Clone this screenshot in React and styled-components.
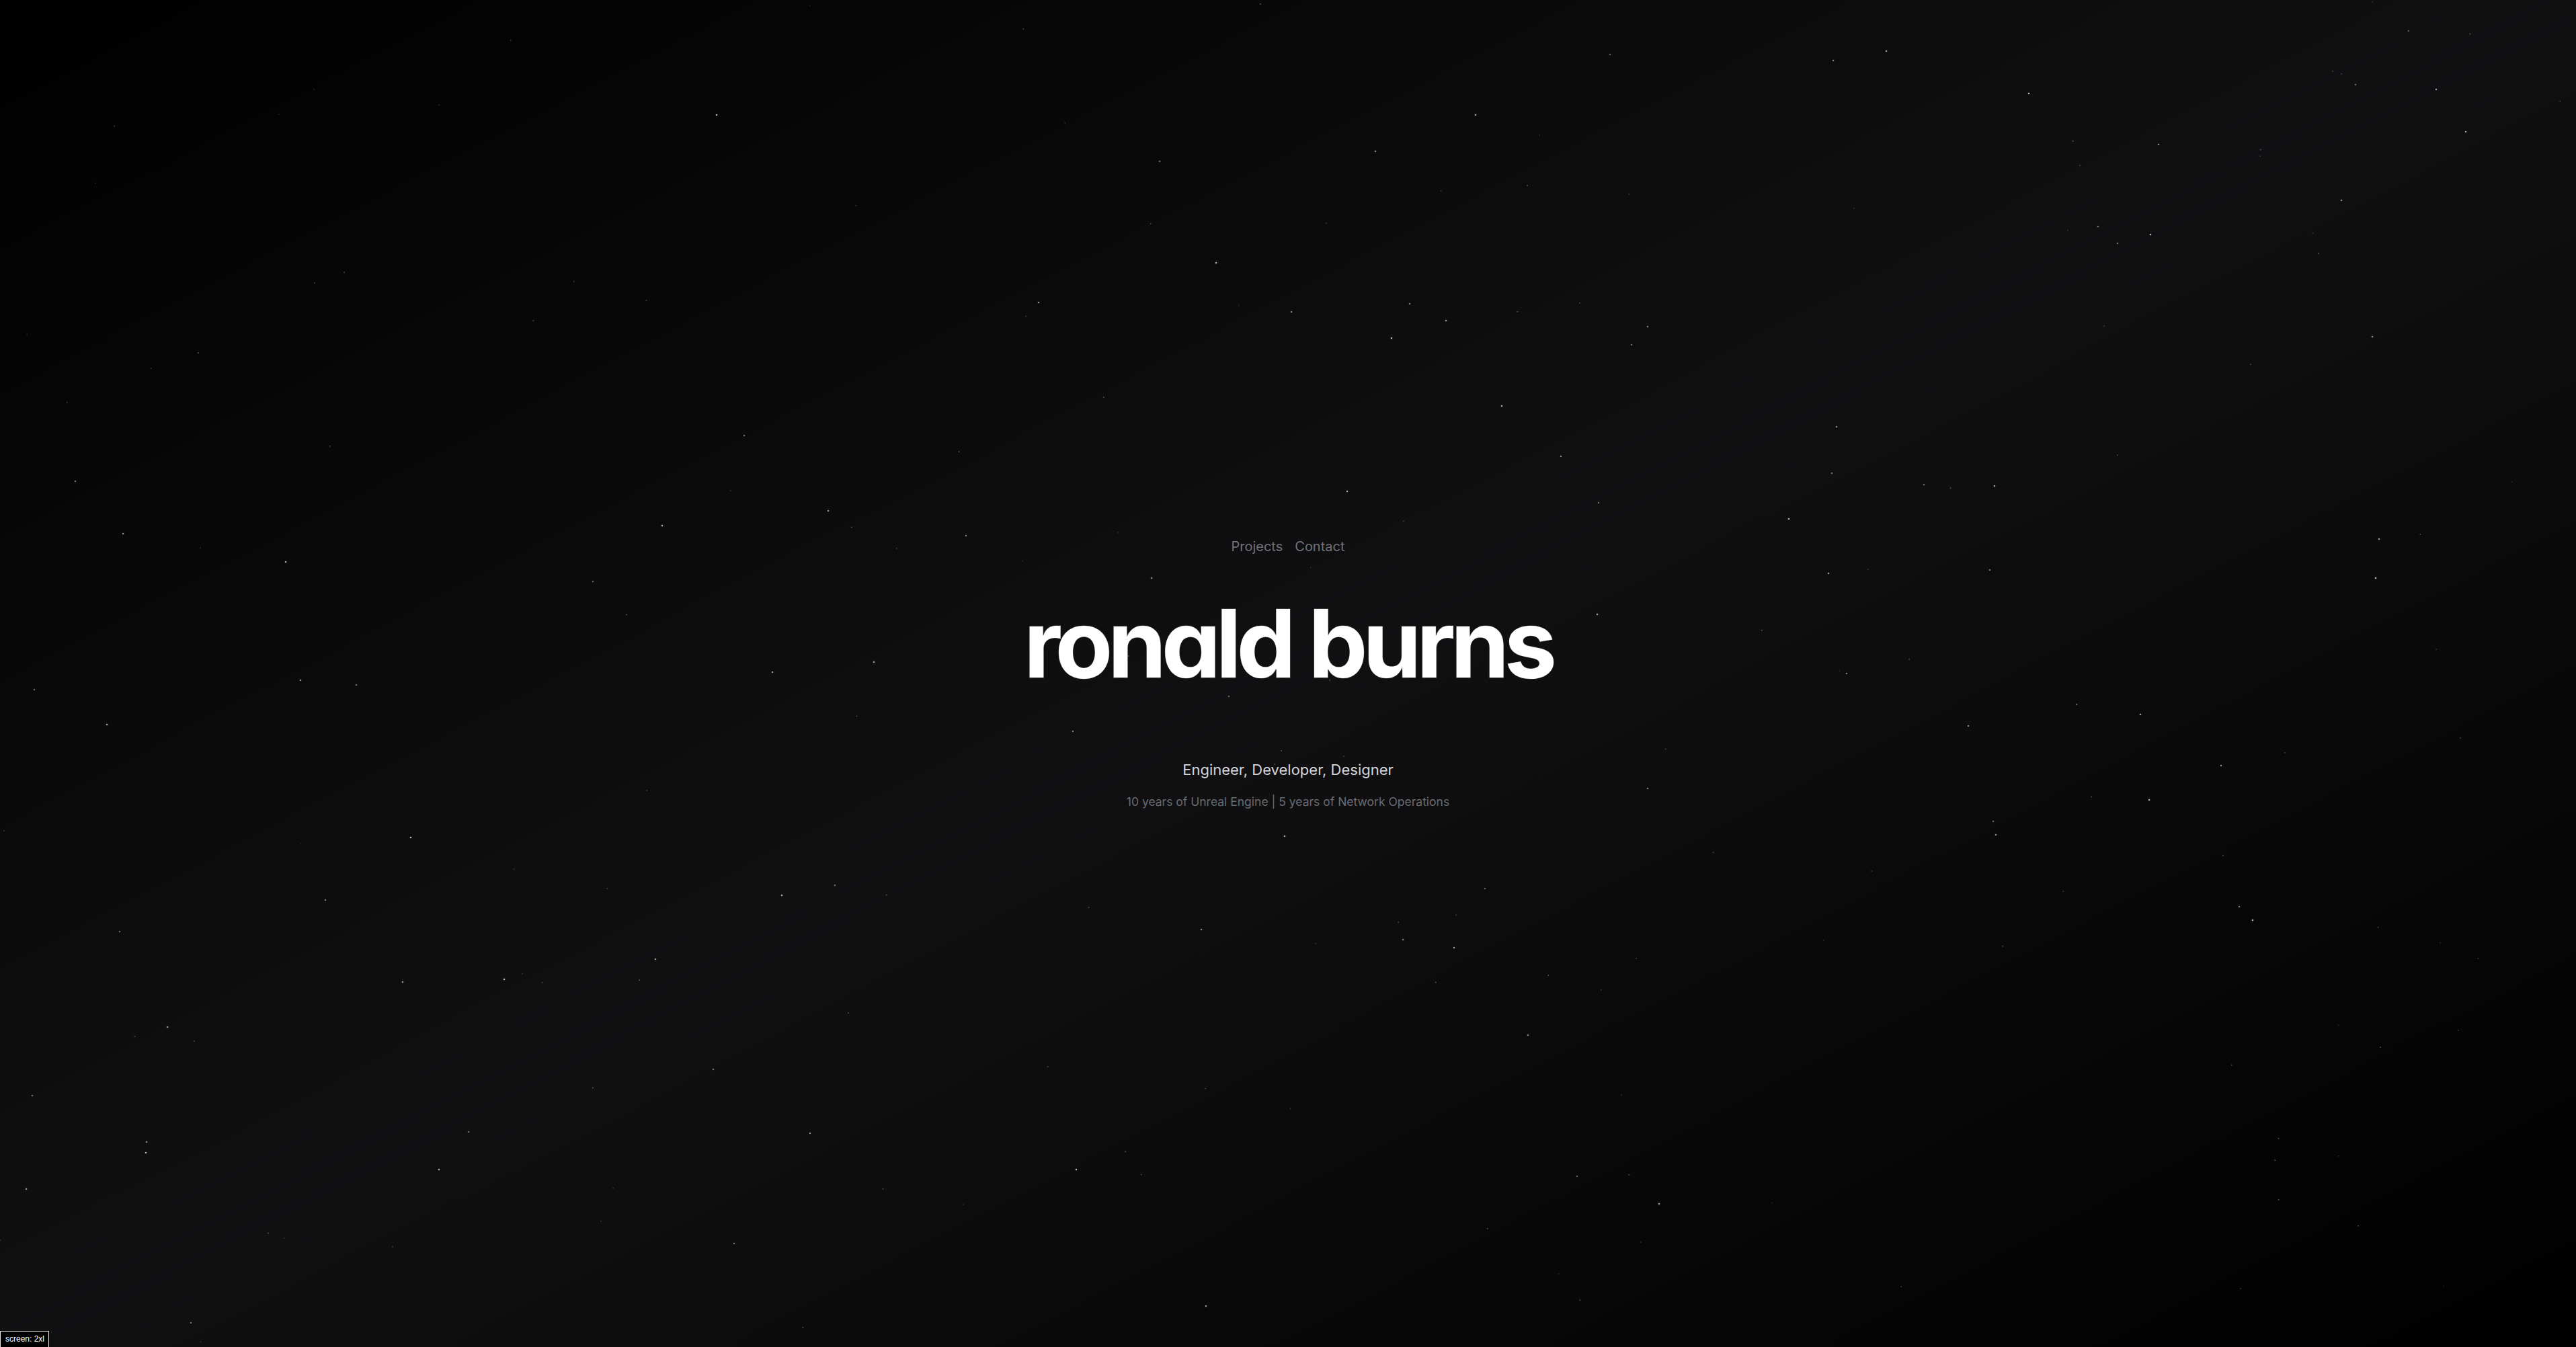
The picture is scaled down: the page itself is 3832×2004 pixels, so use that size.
import React from 'react';
import styled, { createGlobalStyle } from 'styled-components';

const GlobalStyle = createGlobalStyle`
  html, body {
    margin: 0;
    padding: 0;
    background: #000;
  }
  body {
    font-family: Inter, "Noto Sans", sans-serif;
    -webkit-font-smoothing: antialiased;
  }
`;

const Page = styled.div`
  position: relative;
  width: 100vw;
  height: 100vh;
  overflow: hidden;
  display: flex;
  flex-direction: column;
  align-items: center;
  justify-content: center;
  background: linear-gradient(to top left, #000000, rgba(82, 82, 91, 0.2), #000000);
`;

const Particles = styled.svg`
  position: absolute;
  inset: 0;
  width: 100%;
  height: 100%;
  pointer-events: none;
`;

const Nav = styled.nav`
  position: relative;
  display: flex;
  gap: 18px;
  margin-bottom: 60px;
`;

const NavLink = styled.a`
  font-size: 20px;
  line-height: 28px;
  color: #71717a;
  text-decoration: none;
  cursor: pointer;
`;

const Title = styled.h1`
  position: relative;
  margin: 0 0 104px;
  font-size: 140px;
  line-height: 140px;
  font-weight: 700;
  letter-spacing: -0.052em;
  font-feature-settings: "cv11" 1, "ss07" 1;
  color: #ffffff;
  -webkit-text-stroke: 1px rgba(255, 255, 255, 0.3);
  white-space: nowrap;
`;

const Intro = styled.div`
  position: relative;
  display: flex;
  flex-direction: column;
  align-items: center;
  gap: 22px;
  text-align: center;
`;

const Role = styled.h2`
  margin: 0;
  font-size: 22px;
  line-height: 28px;
  font-weight: 400;
  color: #d4d4d8;
`;

const Experience = styled.p`
  margin: 0;
  font-size: 17.5px;
  line-height: 24px;
  color: #6b6b72;
`;

const ScreenBadge = styled.div`
  position: fixed;
  left: 0;
  bottom: 0;
  padding: 3px 6px 4px 7px;
  font-family: "Liberation Sans", Arial, sans-serif;
  font-size: 12px;
  line-height: 16px;
  color: #ffffff;
  background: #000;
  border: 1px solid #e5e5e5;
  border-bottom: none;
`;

const stars = [
  [3583, 46], [3668, 196], [3211, 215], [3150, 362], [3199, 349], [3529, 501],
  [3121, 337], [3018, 139], [2806, 76], [2727, 90], [2395, 81], [2195, 171],
  [2046, 225], [1725, 240], [1809, 391], [1921, 464], [2097, 452], [2070, 503],
  [2151, 477], [2451, 486], [2427, 513], [2234, 604], [2322, 679], [2378, 748],
  [2004, 731], [1545, 450], [1107, 648], [1066, 171], [1232, 760], [1437, 797],
  [2862, 721], [2967, 723], [2732, 635], [2725, 704], [2661, 772], [2720, 853],
  [2960, 848], [3534, 860], [3539, 802], [2747, 1002], [3089, 1048], [3184, 1063],
  [2928, 1080], [2965, 1222], [3197, 1190], [3304, 1139], [3331, 1349], [3351, 1369],
  [2163, 1410], [2087, 1398], [2209, 1322], [1911, 1244], [1787, 1383], [1242, 1317],
  [1163, 1332], [975, 1427], [1061, 1591], [750, 1457], [599, 1461], [484, 1339],
  [178, 1386], [249, 1528], [218, 1699], [697, 1684], [653, 1740], [1205, 1686],
  [1092, 1850], [1601, 1740], [1794, 1943], [2273, 1540], [2346, 1750], [2468, 1791],
  [2969, 1242], [51, 1026], [159, 1078], [447, 1012], [530, 1019], [611, 1246],
  [1300, 985], [1596, 1088], [1828, 1036], [2376, 914], [1713, 860], [882, 865],
  [425, 836], [183, 794], [112, 716], [985, 782], [1149, 1000], [2451, 1173],
  [3504, 126], [3624, 133], [3483, 298], [48, 1630], [217, 1715], [39, 1769],
  [284, 1968],
];

// faint background dust, seeded so every render is the same
const dust = (() => {
  let seed = 7;
  const rand = () => {
    seed = (seed * 16807) % 2147483647;
    return seed / 2147483647;
  };
  return Array.from({ length: 140 }, () => [rand() * 3832, rand() * 2004, 0.12 + rand() * 0.2]);
})();

export default function App() {
  return (
    <>
      <GlobalStyle />
      <Page>
        <Particles viewBox="0 0 3832 2004" preserveAspectRatio="none">
          {dust.map(([x, y, a], i) => (
            <circle key={'d' + i} cx={x} cy={y} r={1} fill="#ffffff" fillOpacity={a} />
          ))}
          {stars.map(([x, y], i) => (
            <circle key={i} cx={x} cy={y} r={1.3} fill="#ffffff" fillOpacity={0.35 + ((i * 37) % 10) / 25} />
          ))}
        </Particles>

        <Nav>
          <NavLink href="#projects">Projects</NavLink>
          <NavLink href="#contact">Contact</NavLink>
        </Nav>

        <Title>ronald burns</Title>

        <Intro>
          <Role>Engineer, Developer, Designer</Role>
          <Experience>10 years of Unreal Engine | 5 years of Network Operations</Experience>
        </Intro>

        <ScreenBadge>screen: 2xl</ScreenBadge>
      </Page>
    </>
  );
}
